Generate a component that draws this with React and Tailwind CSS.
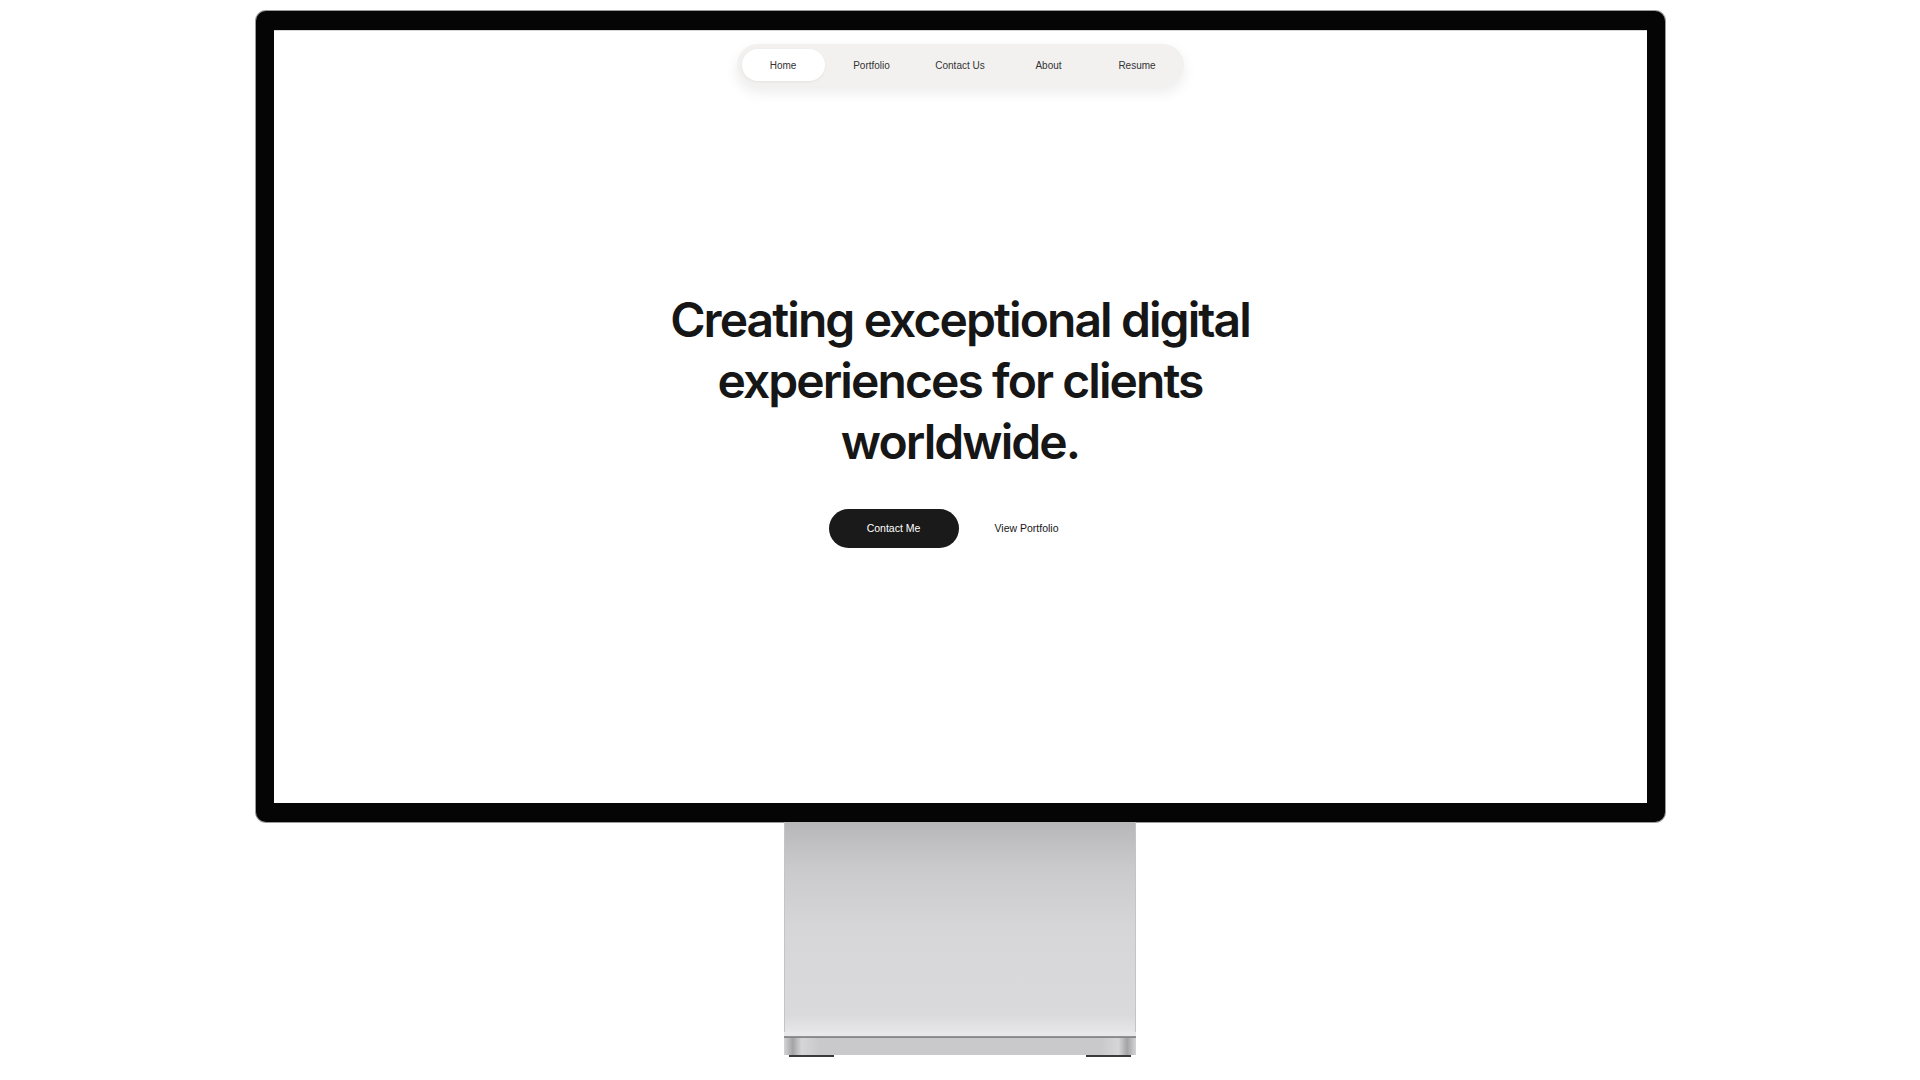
import React from "react";

const links = ["Home", "Portfolio", "Contact Us", "About", "Resume"];

export default function App() {
  return (
    <div className="w-[1920px] h-[1080px] bg-white flex flex-col items-center overflow-hidden">
      {/* monitor */}
      <div className="mt-[11px] w-[1409px] h-[811px] bg-[#050505] rounded-[10px] px-[18px] py-[19px] shadow-[0_0_0_1px_#9a9a9a]">
        <div className="w-full h-full bg-white border-t border-[#d6d6d6] flex flex-col items-center">
          <nav className="mt-[13px] flex gap-[5.5px] p-[5px] bg-[#f2f1f0] rounded-full shadow-[0_6px_14px_rgba(0,0,0,0.08)] font-['Liberation_Sans',Arial,sans-serif]">
            {links.map((l, i) => (
              <a
                key={l}
                className={
                  "w-[83px] h-[32px] flex items-center justify-center rounded-full text-[10px] text-[#333] " +
                  (i === 0 ? "bg-white shadow-[0_1px_3px_rgba(0,0,0,0.06)]" : "")
                }
              >
                {l}
              </a>
            ))}
          </nav>

          <h1 className="mt-[203px] text-center font-['Inter',sans-serif] font-semibold text-[48px] leading-[61px] tracking-[-0.04em] text-[#161616]">
            Creating exceptional digital
            <br />
            experiences for clients
            <br />
            worldwide.
          </h1>

          <div className="mt-[37px] flex gap-[3px] font-['Liberation_Sans',Arial,sans-serif] text-[10.5px]">
            <button className="w-[130px] h-[39px] rounded-full bg-[#1a1a1a] text-white">Contact Me</button>
            <button className="w-[130px] h-[39px] rounded-full text-[#161616]">View Portfolio</button>
          </div>
        </div>
      </div>

      {/* stand */}
      <div className="w-[352px] flex flex-col">
        <div className="h-[210px] bg-[linear-gradient(180deg,#b7b7b9_0%,#cacacc_22%,#d6d6d8_50%,#dadadc_92%,#e6e6e8_100%)] shadow-[inset_1px_0_0_#c4c4c6,inset_-1px_0_0_#c4c4c6]" />
        <div className="h-[4px] bg-[#e8e8ea]" />
        <div className="h-[2px] bg-[linear-gradient(180deg,#9a9a9c,#808082)]" />
        <div className="h-[17px] bg-[linear-gradient(90deg,#d4d4d6_0%,#a4a4a6_2.5%,#d6d6d8_5%,#c9c9cb_10%,#c9c9cb_90%,#d6d6d8_95%,#a4a4a6_97.5%,#d4d4d6_100%)]" />
        <div className="flex justify-between px-[5px]">
          <div className="w-[45px] h-[2px] bg-[#3a3a3c]" />
          <div className="w-[45px] h-[2px] bg-[#3a3a3c]" />
        </div>
      </div>
    </div>
  );
}
